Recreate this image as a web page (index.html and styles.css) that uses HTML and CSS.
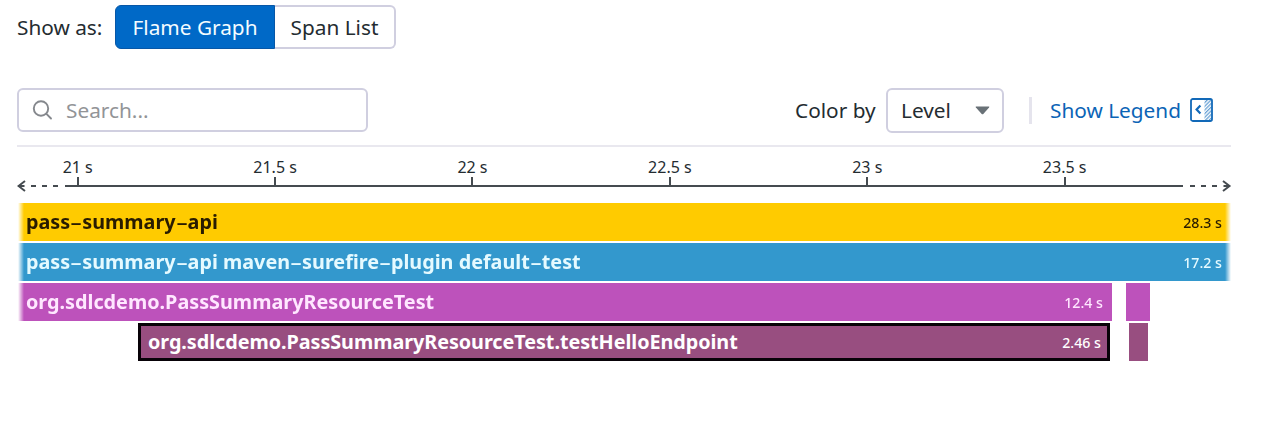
FILE: index.html
```html
<!DOCTYPE html>
<html lang="en">
<head>
<meta charset="utf-8">
<title>Flame Graph</title>
<link rel="stylesheet" href="styles.css">
</head>
<body>
<main class="trace">
  <div class="view-row">
    <span class="view-label">Show as:</span>
    <div class="segmented">
      <button class="segment segment-active"><span>Flame Graph</span></button>
      <button class="segment segment-list"><span>Span List</span></button>
    </div>
  </div>

  <div class="toolbar">
    <div class="search">
      <svg class="search-icon" width="22" height="22" viewBox="0 0 22 22"><circle cx="9" cy="9.500" r="7.2"/><path d="M14.2 14.700 19 19.500"/></svg>
      <span>Search...</span>
    </div>
    <span class="color-label">Color by</span>
    <div class="select"><span>Level</span>
      <svg class="caret" width="15" height="9" viewBox="0 0 15 9"><path d="M1.2.5h12.6q1 0 .3.9L8.3 7.9q-.8.8-1.6 0L.9 1.4Q.2.5 1.2.5z"/></svg>
    </div>
    <span class="separator"></span>
    <a class="legend"><span class="legend-label">Show Legend</span>
      <svg class="legend-icon" width="23" height="24" viewBox="0 0 23 24">
        <defs><pattern id="hatch" width="2.6" height="2.6" patternUnits="userSpaceOnUse" patternTransform="rotate(45)"><path d="M.7 0V2.6" stroke="#3d86c8" stroke-width="1"/></pattern></defs>
        <rect x="14.5" y="1" width="7" height="22" fill="url(#hatch)"/>
        <rect class="line" x="1" y="1" width="21" height="22" rx="1.8"/>
        <path class="chevron" d="M10.4 7.6 6.6 11.6l3.8 4"/>
      </svg>
    </a>
  </div>

  <div class="axis">
    <div class="ticks">
      <span class="tick">21 s</span><span class="tick">21.5 s</span><span class="tick">22 s</span><span class="tick">22.5 s</span><span class="tick">23 s</span><span class="tick">23.5 s</span>
    </div>
    <svg class="axis-line" width="1216" height="12" viewBox="0 0 1216 12">
      <path d="M48 6H1166"/>
      <path d="M14 6h5M25 6h5M36 6h5M1173 6h5M1184 6h5M1195 6h5"/>
      <path d="M8 1 1.5 6l6.500 5M1.500 6h6M1206 1l6.500 5-6.500 5M1212.500 6h-6"/>
    </svg>
  </div>

  <div class="flame">
    <div class="lane"><div class="bar root fade"><span>pass<i class="dash">-</i>summary<i class="dash">-</i>api</span><span class="time">28.3 s</span></div></div>
    <div class="lane"><div class="bar plugin fade"><span>pass<i class="dash">-</i>summary<i class="dash">-</i>api maven<i class="dash">-</i>surefire<i class="dash">-</i>plugin default<i class="dash">-</i>test</span><span class="time">17.2 s</span></div></div>
    <div class="lane"><div class="bar suite fade-left"><span>org.sdlcdemo.PassSummaryResourceTest</span><span class="time">12.4 s</span></div><div class="bar suite-next"></div></div>
    <div class="lane"><div class="bar test"><span class="test-name">org.sdlcdemo.PassSummaryResourceTest.testHelloEndpoint</span><span class="time">2.46 s</span></div><div class="bar test-next"></div></div>
  </div>
</main>
</body>
</html>
```

FILE: styles.css
```css
* { box-sizing: border-box; }
body { margin: 0; background: #fff; color: #242c31; font-family: "Noto Sans", "Open Sans", sans-serif; font-size: 20.8px; font-weight: 400; }
span { white-space: nowrap; }
.trace { width: 1231px; padding: 5px 0 0 17px; }
.view-row { display: flex; align-items: center; height: 44px; }
.view-label { width: 98px; }
.segmented { display: flex; height: 44px; width: 281px; }
.segment { font: inherit; padding: 0; height: 44px; border: 2px solid #d0cfe0; background: #fff; color: #242c31; }
.segment-active { width: 160px; background: #0069c7; border: 1px solid #0757a7; border-radius: 6px 0 0 6px; color: #f4fcff; }
.segment-list { flex: 1; border-left: 0; border-radius: 0 6px 6px 0; }
.toolbar { display: flex; align-items: center; height: 44px; margin-top: 39px; }
.search { display: flex; align-items: center; width: 351px; height: 44px; padding-left: 13px; gap: 12px; border: 2px solid #d0cfe0; border-radius: 6px; color: #929497; }
.search-icon { fill: none; stroke: #85888d; stroke-width: 1.9; stroke-linecap: round; }
.color-label { margin-left: 427px; width: 91px; }
.select { display: flex; align-items: center; justify-content: space-between; width: 118px; height: 45px; padding: 0 12px 0 13px; border: 2px solid #d0cfe0; border-radius: 6px; }
.caret { fill: #697177; }
.separator { width: 3px; height: 27px; margin: 0 18px 0 25px; background: #e5e4ed; }
.legend { display: flex; align-items: center; color: #0b64b6; }
.legend-label { width: 131px; }
.legend-icon { margin-left: 9px; }
.line, .chevron { fill: none; stroke: #1269b8; stroke-width: 1.8; }
.chevron { stroke-width: 2.2; }
.axis { margin-top: 13px; height: 58px; border-top: 2px solid #e9e8ef; }
.ticks { display: grid; grid-template-columns: repeat(6, 197.4px); margin-left: -38px; height: 39px; padding-top: 10px; }
.tick { display: flex; flex-direction: column; align-items: center; font-size: 16px; line-height: 20px; }
.tick::after { content: ""; width: 2px; height: 9px; background: #454b50; }
.axis-line { display: block; margin-top: -6px; fill: none; stroke: #454b50; stroke-width: 2; }
.flame { display: grid; grid-template-rows: repeat(4, 38px); row-gap: 2px; margin-left: 1px; }
.lane { display: flex; }
.bar { display: flex; align-items: center; justify-content: space-between; height: 38px; padding: 0 9px 2px 8px; font-weight: 700; font-size: 19.8px; color: #fff; }
.dash { display: inline-block; width: 12px; font-style: normal; font-weight: 500; text-align: center; transform: scaleX(1.9); }
.time { font-size: 14.2px; font-weight: 500; padding-top: 3px; }
.root { width: 1213px; background: #ffcb00; color: #291c00; }
.plugin { width: 1213px; background: #3398cd; color: #e5faff; }
.suite { width: 1094px; background: #bd52bb; color: #ffe7ff; }
.suite-next { width: 24px; margin-left: 14px; background: #bd52bb; }
.test { width: 972px; margin-left: 120px; padding: 0 6px 2px 7px; border: 3px solid #080208; background: #984e80; }
.test-name { letter-spacing: -0.05px; }
.test-next { width: 19px; margin-left: 19px; background: #984e80; }
.fade { -webkit-mask-image: linear-gradient(to right, transparent, #000 6px, #000 calc(100% - 6px), transparent); mask-image: linear-gradient(to right, transparent, #000 6px, #000 calc(100% - 6px), transparent); }
.fade-left { -webkit-mask-image: linear-gradient(to right, transparent, #000 6px); mask-image: linear-gradient(to right, transparent, #000 6px); }
```
